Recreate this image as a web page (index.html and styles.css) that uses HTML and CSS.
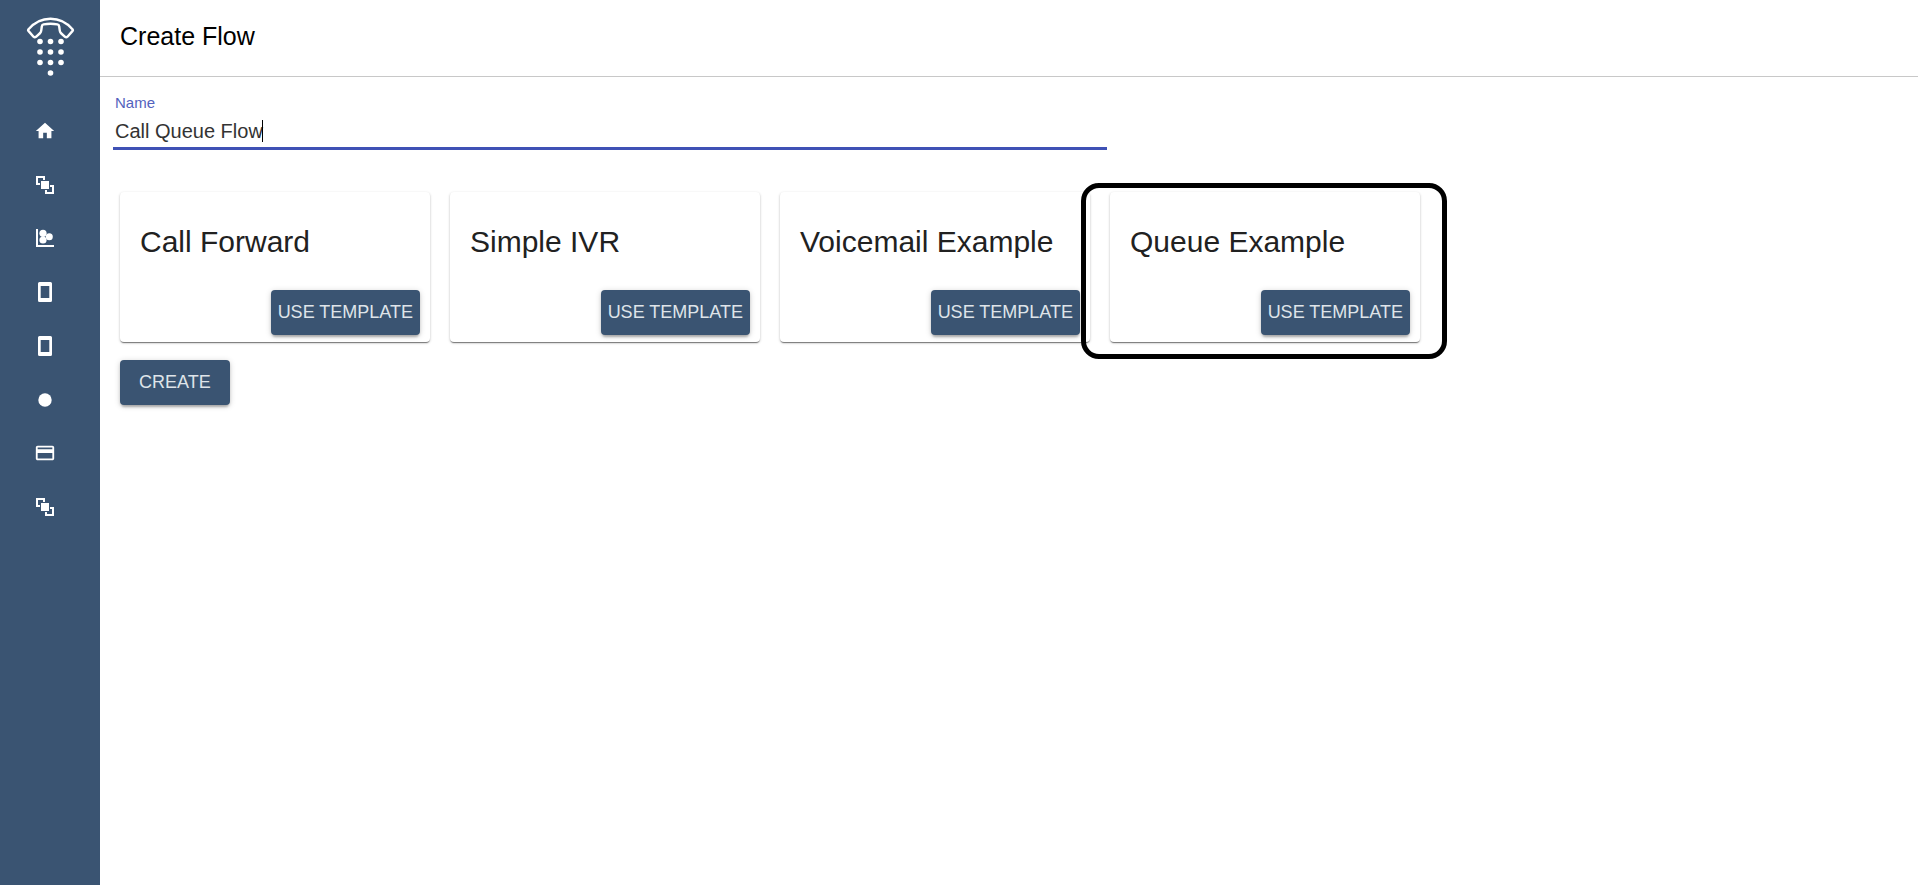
FILE: index.html
```html
<!DOCTYPE html>
<html lang="en">
<head>
  <meta charset="utf-8">
  <title>Create Flow</title>
  <meta name="viewport" content="width=device-width, initial-scale=1">
  <link rel="stylesheet" href="styles.css">
</head>
<body class="app">
  <svg class="sprite" aria-hidden="true">
    <symbol id="icon-home" viewBox="0 0 24 24"><path d="M10 20v-6h4v6h5v-8h3L12 3 2 12h3v8z"/></symbol>
    <symbol id="icon-flow" viewBox="-2 -2 22 22"><path d="M0 0h9v4H7V2H2v5h2v2H0zM5 5h8v8H5zM18 18H9v-4h2v2h5v-5h-2V9h4z"/></symbol>
    <symbol id="icon-stats" viewBox="-2 -2 22 22"><path d="M0 0h2v16h16v2H0z"/><circle cx="7" cy="4.300" r="3.600"/><circle cx="7" cy="11" r="3.600"/><circle cx="13.300" cy="7.700" r="3.500"/></symbol>
    <symbol id="icon-phone" viewBox="-4 -1 22 22"><path fill-rule="evenodd" d="M1.500 0h11Q14 0 14 1.500v17q0 1.500-1.500 1.500h-11Q0 20 0 18.500v-17Q0 0 1.500 0zM2.700 4v12h8.600V4z"/></symbol>
    <symbol id="icon-dot" viewBox="0 0 22 22"><circle cx="11" cy="11" r="6.700"/></symbol>
    <symbol id="icon-card" viewBox="0 0 24 24"><path d="M20 4H4c-1.110 0-1.990.89-1.990 2L2 18c0 1.110.89 2 2 2h16c1.110 0 2-.89 2-2V6c0-1.110-.89-2-2-2zm0 14H4v-6h16v6zm0-10H4V6h16v2z"/></symbol>
  </svg>

  <aside class="sidebar">
    <a class="logo" href="#" aria-label="Start page">
      <svg width="50" height="60" viewBox="0 0 50 60" aria-hidden="true">
        <path class="logo-handset" d="M3.300 13.500Q12.500 2.800 25.500 2.800T47.700 13.500Q48.200 14.200 47.600 14.900L42.500 20.700Q41.300 21.800 40 20.800L35.800 17Q34.900 16 34.700 14.200L34.200 10.500Q34 8.800 32.400 8.400Q25.500 7.200 18.600 8.400Q17 8.800 16.800 10.500L16.300 14.200Q16.100 16 15.200 17L11 20.800Q9.700 21.800 8.500 20.700L3.400 14.900Q2.800 14.200 3.300 13.500z"/>
        <g class="logo-keys">
          <circle cx="15" cy="25.500" r="2.800"/><circle cx="25.500" cy="25.500" r="2.800"/><circle cx="36" cy="25.500" r="2.800"/>
          <circle cx="15" cy="36" r="2.800"/><circle cx="25.500" cy="36" r="2.800"/><circle cx="36" cy="36" r="2.800"/>
          <circle cx="15" cy="46.500" r="2.800"/><circle cx="25.500" cy="46.500" r="2.800"/><circle cx="36" cy="46.500" r="2.800"/>
          <circle cx="25.500" cy="57" r="2.800"/>
        </g>
      </svg>
    </a>
    <nav class="nav" aria-label="Main">
      <a class="nav-link" href="#" aria-label="Home"><svg class="icon"><use href="#icon-home"/></svg></a>
      <a class="nav-link" href="#" aria-label="Flows"><svg class="icon"><use href="#icon-flow"/></svg></a>
      <a class="nav-link" href="#" aria-label="Statistics"><svg class="icon"><use href="#icon-stats"/></svg></a>
      <a class="nav-link" href="#" aria-label="Numbers"><svg class="icon"><use href="#icon-phone"/></svg></a>
      <a class="nav-link" href="#" aria-label="Devices"><svg class="icon"><use href="#icon-phone"/></svg></a>
      <a class="nav-link" href="#" aria-label="Recordings"><svg class="icon"><use href="#icon-dot"/></svg></a>
      <a class="nav-link" href="#" aria-label="Billing"><svg class="icon"><use href="#icon-card"/></svg></a>
      <a class="nav-link" href="#" aria-label="Integrations"><svg class="icon"><use href="#icon-flow"/></svg></a>
    </nav>
  </aside>

  <div class="page">
    <header class="page-header">
      <h1 class="page-title">Create Flow</h1>
    </header>
    <main class="content">
      <form class="form">
        <div class="field">
          <label class="field-label" for="flow-name">Name</label>
          <div class="field-line">
            <input class="field-input" id="flow-name" type="text" value="Call Queue Flow">
            <span class="caret"></span>
          </div>
        </div>
        <div class="cards">
          <section class="card">
            <h2 class="card-title">Call Forward</h2>
            <button class="button button-template" type="button">USE TEMPLATE</button>
          </section>
          <section class="card">
            <h2 class="card-title">Simple IVR</h2>
            <button class="button button-template" type="button">USE TEMPLATE</button>
          </section>
          <section class="card">
            <h2 class="card-title">Voicemail Example</h2>
            <button class="button button-template" type="button">USE TEMPLATE</button>
          </section>
          <section class="card card-marked">
            <h2 class="card-title">Queue Example</h2>
            <button class="button button-template" type="button">USE TEMPLATE</button>
          </section>
        </div>
        <button class="button button-create" type="submit">CREATE</button>
      </form>
    </main>
  </div>
</body>
</html>
```

FILE: styles.css
```css
* {
  box-sizing: border-box;
}

.app {
  display: flex;
  min-height: 100vh;
  margin: 0;
  background: #fff;
  color: #212121;
  font-family: "Liberation Sans", Arial, sans-serif;
}

.sprite {
  position: absolute;
  width: 0;
  height: 0;
}

.sidebar {
  flex: 0 0 100px;
  background: #3a5472;
}

.logo {
  display: flex;
  justify-content: center;
  padding-top: 16px;
}

.logo-handset {
  fill: none;
  stroke: #fff;
  stroke-width: 2.4;
  stroke-linejoin: round;
}

.logo-keys {
  fill: #fff;
}

.nav {
  display: grid;
  grid-auto-rows: 1fr;
  height: 430px;
  margin-top: 28px;
  padding-right: 10px;
}

.nav-link {
  display: flex;
  align-items: center;
  justify-content: center;
}

.icon {
  width: 22px;
  height: 22px;
  fill: #fff;
}

.page {
  flex: 1;
  min-width: 0;
}

.page-header {
  display: flex;
  align-items: center;
  height: 77px;
  padding: 0 20px 4px;
  border-bottom: 1px solid #c8c8c8;
}

.page-title {
  margin: 0;
  color: #000;
  font-size: 25px;
  font-weight: 400;
  line-height: 30px;
}

.content {
  padding: 16px 5px;
}

.field {
  width: 55%;
  margin-left: 8px;
  border-bottom: 3px solid #3f51b5;
}

.field-label {
  display: block;
  padding-left: 2px;
  color: #5362bd;
  font-size: 15px;
  line-height: 20px;
}

.field-line {
  position: relative;
  padding-left: 2px;
}

.field-input {
  display: block;
  width: 100%;
  height: 34px;
  padding: 2px 0 0;
  border: 0;
  outline: 0;
  background: transparent;
  color: #333;
  font-family: inherit;
  font-size: 20px;
}

.caret {
  position: absolute;
  top: 7px;
  left: 149px;
  width: 1px;
  height: 22px;
  background: #000;
}

.cards {
  display: flex;
  flex-wrap: wrap;
  gap: 20px;
  margin: 42px 15px 18px;
}

.card {
  display: flex;
  position: relative;
  flex-direction: column;
  align-items: flex-start;
  justify-content: space-between;
  width: 310px;
  min-height: 150px;
  padding: 30px 10px 7px;
  border-radius: 4px;
  background: #fff;
  box-shadow: 0 2px 1px -1px rgba(0, 0, 0, .3), 0 1px 1px rgba(0, 0, 0, .22), 0 1px 3px rgba(0, 0, 0, .2);
}

.card-title {
  margin: 0;
  padding: 0 10px;
  font-size: 30px;
  font-weight: 400;
  line-height: 40px;
}

.card-marked::after {
  content: "";
  position: absolute;
  inset: -9px -27px -17px -29px;
  border: 5px solid #000;
  border-radius: 18px;
  pointer-events: none;
}

.button {
  height: 45px;
  border: 0;
  border-radius: 4px;
  background: #3a5472;
  box-shadow: 0 4px 2px -2px rgba(0, 0, 0, .15), 0 2px 3px rgba(0, 0, 0, .14), 0 1px 6px rgba(0, 0, 0, .16);
  color: #dfe4e9;
  font-family: inherit;
  font-size: 18px;
  line-height: 20px;
}

.button-template {
  align-self: flex-end;
  padding: 0 7px 2px;
}

.button-create {
  margin-left: 15px;
  padding: 0 19px 2px;
}
```
